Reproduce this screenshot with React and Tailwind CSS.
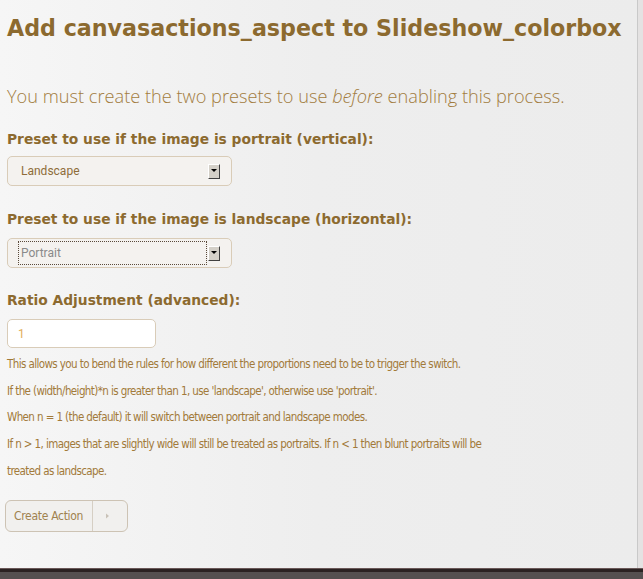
export default function App() {
  const brown = 'text-[#8c6a2f]'
  return (
    <div className="w-[643px] h-[579px] flex flex-col bg-[#d9d6d6] overflow-hidden font-['DejaVu_Sans',sans-serif]">
      <div className="flex flex-1">
        {/* Main panel */}
        <div className="w-[638px] bg-[#eeeeee] bg-gradient-to-r from-[#f6f6f6] via-[#eeeeee] to-[#ececec] border-r border-[#c9c9c9] px-[7px] flex flex-col">
          <h1 className={`mt-[14px] text-[22.2px] leading-[28px] font-bold ${brown}`}>
            Add canvasactions_aspect to Slideshow_colorbox
          </h1>

          <p className="mt-[42px] text-[18.2px] leading-[24px] font-light text-[#a27c3e] font-['Open_Sans',sans-serif]">
            You must create the two presets to use <em>before</em> enabling this process.
          </p>

          <label className={`mt-[21px] text-[13.8px] leading-[20px] font-bold ${brown}`}>
            Preset to use if the image is portrait (vertical):
          </label>
          <div className="mt-[7px] w-[225px] h-[30px] rounded-[5px] border border-[#d9ccb8] bg-[#f4f2ef] flex items-center pl-[13px] pr-[11px]">
            <span className="flex-1 text-[12px] text-[#8e6d3a] font-['Roboto',sans-serif]">Landscape</span>
            <SelectArrow />
          </div>

          <label className={`mt-[23px] text-[13.8px] leading-[20px] font-bold ${brown}`}>
            Preset to use if the image is landscape (horizontal):
          </label>
          <div className="mt-[9px] w-[225px] h-[30px] rounded-[5px] border border-[#d9ccb8] bg-[#f4f2ef] flex items-center pl-[10px] pr-[11px]">
            <div className="flex-1 h-[24px] mr-[1px] border border-dotted border-[#5a4a3a] flex items-center pl-[2px]">
              <span className="text-[12px] text-[#8a8a8a] font-['Roboto',sans-serif]">Portrait</span>
            </div>
            <SelectArrow />
          </div>

          <label className={`mt-[22px] text-[13.8px] leading-[20px] font-bold ${brown}`}>
            Ratio Adjustment (advanced):
          </label>
          <div className="mt-[9px] w-[149px] h-[29px] rounded-[5px] border border-[#d9ccb8] bg-white flex items-center pl-[10px]">
            <span className="text-[12px] text-[#e2ad5a] font-['Roboto',sans-serif]">1</span>
          </div>

          <div className="mt-[3px] w-[490px] text-[11.5px] leading-[26.7px] text-[#a27a3a] font-['DejaVu_Sans_Condensed',sans-serif] tracking-[-0.6px]">
            <p>This allows you to bend the rules for how different the proportions need to be to trigger the switch.</p>
            <p>If the (width/height)*n is greater than 1, use 'landscape', otherwise use 'portrait'.</p>
            <p>When n = 1 (the default) it will switch between portrait and landscape modes.</p>
            <p>If n &gt; 1, images that are slightly wide will still be treated as portraits. If n &lt; 1 then blunt portraits will be treated as landscape.</p>
          </div>

          <div className="mt-[15px] ml-[-2px] w-[123px] h-[32px] rounded-[6px] border border-[#cdc3b4] bg-[#f1f0ee] flex items-center">
            <span className="pl-[8px] pr-[9px] text-[12px] text-[#a0824f] font-['DejaVu_Sans_Condensed',sans-serif] tracking-[-0.3px]">Create Action</span>
            <div className="w-px h-[30px] bg-[#d6cfc4]" />
            <svg width="5" height="6" viewBox="0 0 5 6" className="ml-[12px]">
              <path d="M1 0.5 L4 3 L1 5.5 Z" fill="#c9c2b8" />
            </svg>
          </div>
        </div>
        <div className="flex-1 bg-[#e4e2e2]" />
      </div>
      {/* Bottom bar */}
      <div className="h-[11px] bg-[#3d3030] border-t border-[#6a5858] flex flex-col">
        <div className="h-[3px] bg-[#2b2222]" />
        <div className="flex-1 bg-[#555050]" />
      </div>
    </div>
  )
}

function SelectArrow() {
  return (
    <div className="w-[12px] h-[15px] bg-[#d4d0c8] border-r border-b border-[#404040] border-l border-t border-l-white border-t-white flex items-center justify-center">
      <svg width="6" height="4" viewBox="0 0 6 4">
        <path d="M0 0 H6 L3 3 Z" fill="#000" />
      </svg>
    </div>
  )
}
